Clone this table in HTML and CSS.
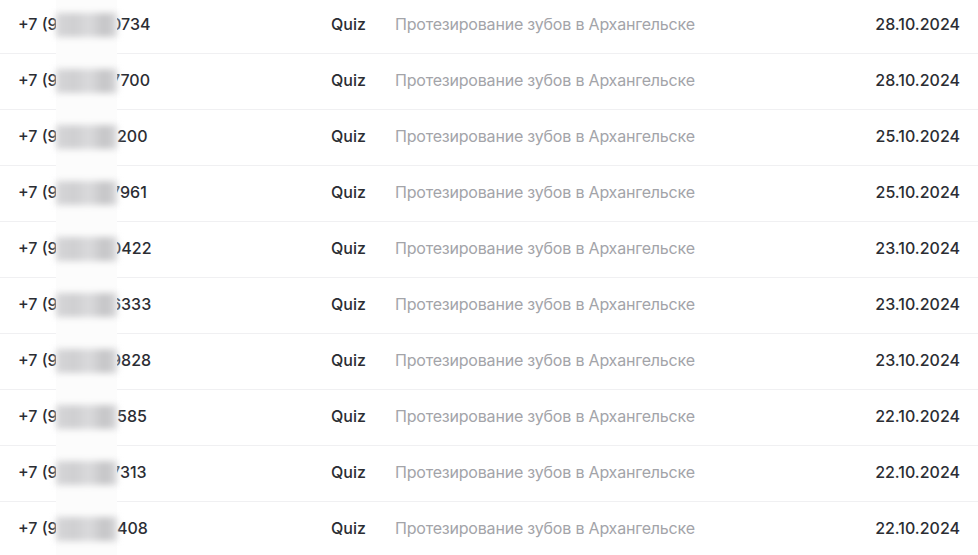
FILE: index.html
```html
<!DOCTYPE html>
<html lang="ru">
<head>
<meta charset="utf-8">
<link rel="stylesheet" href="styles.css">
</head>
<body>
<div class="list">
  <div class="row"><div class="phone"><span class="head">+7 (9</span><span class="mask"><i></i></span><span class="tail">0734</span></div><div class="src">Quiz</div><div class="desc">Протезирование зубов в Архангельске</div><div class="date">28.10.2024</div></div>
  <div class="row"><div class="phone"><span class="head">+7 (9</span><span class="mask"><i></i></span><span class="tail">7700</span></div><div class="src">Quiz</div><div class="desc">Протезирование зубов в Архангельске</div><div class="date">28.10.2024</div></div>
  <div class="row"><div class="phone"><span class="head">+7 (9</span><span class="mask"><i></i></span><span class="tail tail-short">200</span></div><div class="src">Quiz</div><div class="desc">Протезирование зубов в Архангельске</div><div class="date">25.10.2024</div></div>
  <div class="row"><div class="phone"><span class="head">+7 (9</span><span class="mask"><i></i></span><span class="tail">7961</span></div><div class="src">Quiz</div><div class="desc">Протезирование зубов в Архангельске</div><div class="date">25.10.2024</div></div>
  <div class="row"><div class="phone"><span class="head">+7 (9</span><span class="mask"><i></i></span><span class="tail">0422</span></div><div class="src">Quiz</div><div class="desc">Протезирование зубов в Архангельске</div><div class="date">23.10.2024</div></div>
  <div class="row"><div class="phone"><span class="head">+7 (9</span><span class="mask"><i></i></span><span class="tail">6333</span></div><div class="src">Quiz</div><div class="desc">Протезирование зубов в Архангельске</div><div class="date">23.10.2024</div></div>
  <div class="row"><div class="phone"><span class="head">+7 (9</span><span class="mask"><i></i></span><span class="tail">9828</span></div><div class="src">Quiz</div><div class="desc">Протезирование зубов в Архангельске</div><div class="date">23.10.2024</div></div>
  <div class="row"><div class="phone"><span class="head">+7 (9</span><span class="mask"><i></i></span><span class="tail tail-short">585</span></div><div class="src">Quiz</div><div class="desc">Протезирование зубов в Архангельске</div><div class="date">22.10.2024</div></div>
  <div class="row"><div class="phone"><span class="head">+7 (9</span><span class="mask"><i></i></span><span class="tail">7313</span></div><div class="src">Quiz</div><div class="desc">Протезирование зубов в Архангельске</div><div class="date">22.10.2024</div></div>
  <div class="row"><div class="phone"><span class="head">+7 (9</span><span class="mask"><i></i></span><span class="tail tail-short">408</span></div><div class="src">Quiz</div><div class="desc">Протезирование зубов в Архангельске</div><div class="date">22.10.2024</div></div>
</div>
</body>
</html>
```
FILE: styles.css
```css
html, body {
  margin: 0;
  padding: 0;
  background: #ffffff;
}
body {
  font-family: Inter, "Noto Sans", sans-serif;
  font-size: 16px;
  font-weight: 500;
  color: #2b2d33;
  overflow: hidden;
}
.list {
  margin-top: -2px;
}
.row {
  position: relative;
  box-sizing: border-box;
  display: grid;
  grid-template-columns: 313px 64px 1fr auto;
  align-items: center;
  height: 56px;
  padding: 0 18px 4px;
  border-bottom: 1px solid #f0f0f2;
}
.phone {
  display: flex;
  white-space: nowrap;
}
.head {
  width: 38px;
  overflow: visible;
}
.tail {
  margin-left: 55px;
}
.tail-short {
  margin-left: 61px;
}
.mask {
  position: absolute;
  left: 56px;
  top: -1px;
  bottom: -1px;
  width: 61px;
  background: #fcfcfc;
  z-index: 1;
  display: flex;
  align-items: center;
}
.mask i {
  display: block;
  width: 100%;
  height: 24px;
  margin-top: -2px;
  background: linear-gradient(90deg, #d6d6d8 0%, #cfcfd1 30%, #dadadc 55%, #c4c4c6 80%, #d8d8da 100%);
  filter: blur(3px);
}
.src {
  color: #2b2d33;
}
.desc {
  color: #a3a4a9;
  font-weight: 400;
  letter-spacing: -0.2px;
}
.date {
  text-align: right;
}
```
